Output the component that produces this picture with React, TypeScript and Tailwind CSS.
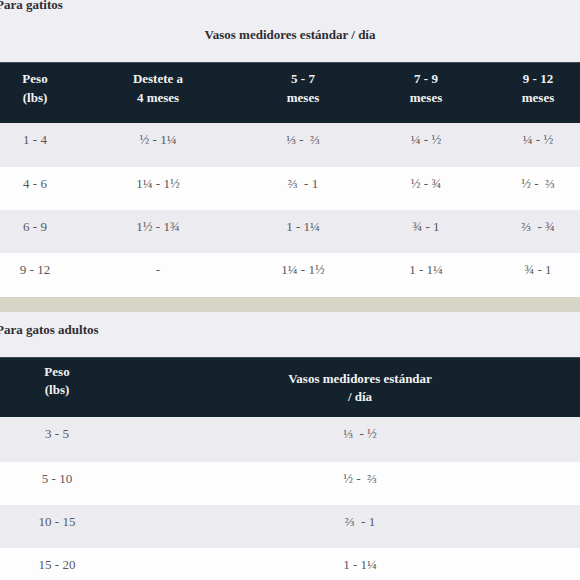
import React from "react";

const serif = { fontFamily: '"Liberation Serif", "DejaVu Serif", serif' };

const kCols = "grid grid-cols-[70px_176px_114px_132px_92px]";
const aCols = "grid grid-cols-[114px_492px]";

const kittenRows = [
  ["1 - 4", "½ - 1¼", "⅓ -  ⅔", "¼ - ½", "¼ - ½"],
  ["4 - 6", "1¼ - 1½", "⅔  - 1", "½ - ¾", "½ -  ⅔"],
  ["6 - 9", "1½ - 1¾", "1 - 1¼", "¾ - 1", "⅔  - ¾"],
  ["9 - 12", "-", "1¼ - 1½", "1 - 1¼", "¾ - 1"],
];
const kittenHeights = ["h-[44px] bg-[#ecebf0]", "h-[43px] bg-[#fdfdfd]", "h-[43px] bg-[#ecebf0]", "h-[44px] bg-[#fdfdfd]"];

const adultRows = [
  ["3 - 5", "⅓  - ½"],
  ["5 - 10", "½ -  ⅔"],
  ["10 - 15", "⅔  - 1"],
  ["15 - 20", "1 - 1¼"],
];
const adultHeights = ["h-[45px] bg-[#ecebf0]", "h-[43px] bg-[#fdfdfd]", "h-[43px] bg-[#ecebf0]", "h-[44px] bg-[#fdfdfd]"];

export default function App() {
  return (
    <div className="w-[580px] h-[580px] overflow-hidden bg-[#efeff3]" style={serif}>
      <div className="w-[620px]">
        <div className="-mt-[3px] -ml-[4px] text-[13px] leading-[16px] font-bold text-[#2e2e32]">Para gatitos</div>
        <div className="mt-[14px] w-[580px] text-center text-[13px] leading-[16px] font-bold text-[#2e2e32]">
          Vasos medidores estándar / día
        </div>
        <div className={`${kCols} mt-[19px] h-[61px] bg-[#13222d] border-t border-[#3b4a55] text-[13px] leading-[19px] font-bold text-[#f2f2f2] text-center`}>
          {[["Peso", "(lbs)"], ["Destete a", "4 meses"], ["5 - 7", "meses"], ["7 - 9", "meses"], ["9 - 12", "meses"]].map((h, i) => (
            <div key={i} className="pt-[6px]">
              <div>{h[0]}</div>
              <div>{h[1]}</div>
            </div>
          ))}
        </div>
        {kittenRows.map((r, i) => (
          <div key={i} className={`${kCols} ${kittenHeights[i]} text-[13px] leading-[20px] text-[#58585c] text-center whitespace-pre`}>
            {r.map((c, j) => (
              <div key={j} className="pt-[7px]">{c}</div>
            ))}
          </div>
        ))}
        <div className="h-[15px] bg-[#d7d6c6]" />
        <div className="mt-[10px] -ml-[4px] text-[13px] leading-[16px] font-bold text-[#2e2e32]">Para gatos adultos</div>
        <div className={`${aCols} mt-[19px] h-[60px] bg-[#13222d] border-t border-[#3b4a55] text-[13px] leading-[18px] font-bold text-[#f2f2f2] text-center`}>
          <div className="pt-[5px]">
            <div>Peso</div>
            <div>(lbs)</div>
          </div>
          <div className="pt-[12px]">
            <div>Vasos medidores estándar</div>
            <div>/ día</div>
          </div>
        </div>
        {adultRows.map((r, i) => (
          <div key={i} className={`${aCols} ${adultHeights[i]} text-[13px] leading-[20px] text-[#58585c] text-center whitespace-pre`}>
            {r.map((c, j) => (
              <div key={j} className="pt-[7px]">{c}</div>
            ))}
          </div>
        ))}
      </div>
    </div>
  );
}
